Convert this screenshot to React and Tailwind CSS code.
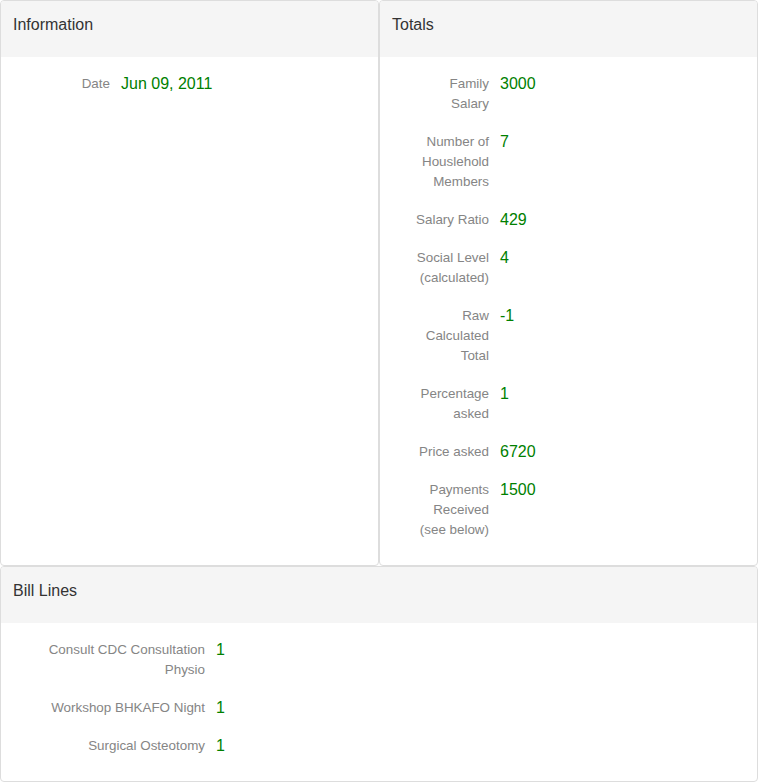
const info = [{ label: "Date", value: "Jun 09, 2011" }];

const totals = [
  { label: "Family Salary", value: "3000" },
  { label: "Number of Houslehold Members", value: "7" },
  { label: "Salary Ratio", value: "429" },
  { label: "Social Level (calculated)", value: "4" },
  { label: "Raw Calculated Total", value: "-1" },
  { label: "Percentage asked", value: "1" },
  { label: "Price asked", value: "6720" },
  { label: "Payments Received (see below)", value: "1500" },
];

const billLines = [
  { label: "Consult CDC Consultation Physio", value: "1" },
  { label: "Workshop BHKAFO Night", value: "1" },
  { label: "Surgical Osteotomy", value: "1" },
];

function Panel({ title, className = "", children }) {
  return (
    <div className={`bg-white border border-[#ddd] rounded-[4px] flex flex-col overflow-hidden ${className}`}>
      <div className="h-[56px] bg-[#f5f5f5] px-[12px] pt-[13px] text-[16px] leading-[22px] text-[#333] shrink-0">
        {title}
      </div>
      <div className="flex-1 pt-[17px] pb-[7px]">{children}</div>
    </div>
  );
}

function Row({ label, value, labelClass }) {
  return (
    <div className="flex items-start mb-[18px]">
      <div className={`text-right text-[13.4px] leading-[20px] text-[#858585] ${labelClass}`}>
        {label}
      </div>
      <div className="ml-[11px] text-[16px] leading-[20px] text-[#008000]">
        {value}
      </div>
    </div>
  );
}

export default function App() {
  return (
    <div className="w-[758px] font-['Liberation_Sans',Arial,sans-serif]">
      <div className="flex">
        <Panel title="Information" className="w-[379px]">
          {info.map((r) => (
            <Row key={r.label} {...r} labelClass="ml-[31px] w-[78px]" />
          ))}
        </Panel>
        <Panel title="Totals" className="w-[379px]">
          {totals.map((r) => (
            <Row key={r.label} {...r} labelClass="ml-[31px] w-[78px]" />
          ))}
        </Panel>
      </div>
      <Panel title="Bill Lines" className="w-[758px]">
        {billLines.map((r) => (
          <Row key={r.label} {...r} labelClass="ml-[24px] w-[180px]" />
        ))}
      </Panel>
    </div>
  );
}
